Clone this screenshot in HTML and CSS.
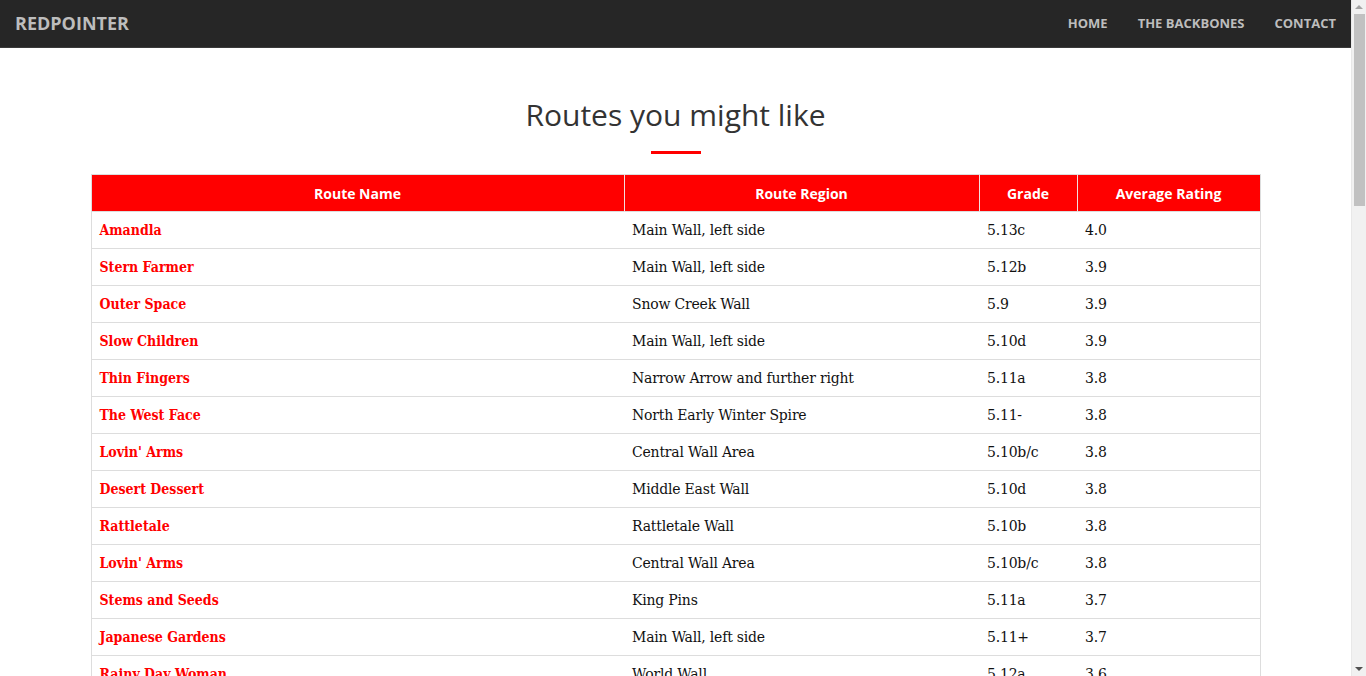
FILE: index.html
```html
<!DOCTYPE html>
<html lang="en">
<head>
<meta charset="utf-8">
<title>Redpointer</title>
<link rel="stylesheet" href="styles.css">
</head>
<body>
<nav class="navbar">
  <a class="brand" href="#">REDPOINTER</a>
  <ul class="nav-links">
    <li><a href="#">HOME</a></li>
    <li><a href="#">THE BACKBONES</a></li>
    <li><a href="#">CONTACT</a></li>
  </ul>
</nav>
<main class="container">
  <h2 class="section-title">Routes you might like</h2>
  <hr class="divider">
  <table class="routes">
    <thead>
      <tr>
        <th class="c-name">Route Name</th>
        <th class="c-region">Route Region</th>
        <th class="c-grade">Grade</th>
        <th class="c-rating">Average Rating</th>
      </tr>
    </thead>
    <tbody>
      <tr><td><a href="#">Amandla</a></td><td>Main Wall, left side</td><td>5.13c</td><td>4.0</td></tr>
      <tr><td><a href="#">Stern Farmer</a></td><td>Main Wall, left side</td><td>5.12b</td><td>3.9</td></tr>
      <tr><td><a href="#">Outer Space</a></td><td>Snow Creek Wall</td><td>5.9</td><td>3.9</td></tr>
      <tr><td><a href="#">Slow Children</a></td><td>Main Wall, left side</td><td>5.10d</td><td>3.9</td></tr>
      <tr><td><a href="#">Thin Fingers</a></td><td>Narrow Arrow and further right</td><td>5.11a</td><td>3.8</td></tr>
      <tr><td><a href="#">The West Face</a></td><td>North Early Winter Spire</td><td>5.11-</td><td>3.8</td></tr>
      <tr><td><a href="#">Lovin' Arms</a></td><td>Central Wall Area</td><td>5.10b/c</td><td>3.8</td></tr>
      <tr><td><a href="#">Desert Dessert</a></td><td>Middle East Wall</td><td>5.10d</td><td>3.8</td></tr>
      <tr><td><a href="#">Rattletale</a></td><td>Rattletale Wall</td><td>5.10b</td><td>3.8</td></tr>
      <tr><td><a href="#">Lovin' Arms</a></td><td>Central Wall Area</td><td>5.10b/c</td><td>3.8</td></tr>
      <tr><td><a href="#">Stems and Seeds</a></td><td>King Pins</td><td>5.11a</td><td>3.7</td></tr>
      <tr><td><a href="#">Japanese Gardens</a></td><td>Main Wall, left side</td><td>5.11+</td><td>3.7</td></tr>
      <tr><td><a href="#">Rainy Day Woman</a></td><td>World Wall</td><td>5.12a</td><td>3.6</td></tr>
      <tr><td><a href="#">Touch and Go</a></td><td>Main Wall, left side</td><td>5.9</td><td>3.6</td></tr>
      <tr><td><a href="#">Air Guitar</a></td><td>Central Wall Area</td><td>5.10b</td><td>3.6</td></tr>
      <tr><td><a href="#">Crack of Doom</a></td><td>Snow Creek Wall</td><td>5.10c</td><td>3.5</td></tr>
    </tbody>
  </table>
</main>
<div class="scrollbar" aria-hidden="true">
  <span class="arrow up"></span>
  <span class="thumb"></span>
  <span class="arrow down"></span>
</div>
</body>
</html>
```
FILE: styles.css
```css
html, body {
  margin: 0;
  padding: 0;
}
body {
  font-family: "DejaVu Serif", "Liberation Serif", serif;
  font-size: 14px;
  color: #000;
  background: #fff;
  margin-right: 15px;
}
.navbar {
  display: flex;
  align-items: center;
  justify-content: space-between;
  height: 46px;
  padding: 0 15px 1px;
  background: #262626;
  border-bottom: 1px solid #3a3a3a;
}
.brand {
  font-family: "Open Sans", sans-serif;
  font-weight: 700;
  font-size: 18px;
  color: #bdbdbd;
  text-decoration: none;
}
.nav-links {
  display: flex;
  list-style: none;
  margin: 0;
  padding: 0;
  gap: 30px;
}
.nav-links a {
  font-family: "Open Sans", sans-serif;
  font-weight: 700;
  font-size: 13px;
  color: #bdbdbd;
  text-decoration: none;
}
.container {
  width: 1170px;
  margin: 0 auto;
  padding-top: 47px;
  padding-bottom: 40px;
}
.section-title {
  font-family: "Open Sans", sans-serif;
  font-weight: 400;
  font-size: 30px;
  color: #333;
  text-align: center;
  margin: 0;
  line-height: 40px;
}
.divider {
  width: 50px;
  height: 3px;
  border: 0;
  background: #ff0000;
  margin: 16px auto 20px;
}
.routes {
  width: 1170px;
  border-collapse: collapse;
  border: 1px solid #ddd;
}
.routes th {
  background: #ff0000;
  color: #fff;
  font-family: "Open Sans", sans-serif;
  font-weight: 700;
  font-size: 14px;
  height: 37px;
  padding: 0 8px;
  text-align: center;
  border-left: 1px solid #f3dede;
  box-sizing: border-box;
}
.routes th:first-child { border-left: 0; }
.c-name { width: 533px; }
.c-region { width: 355px; }
.c-grade { width: 98px; }
.c-rating { width: 183px; }
.routes td {
  padding: 8px;
  line-height: 20px;
  border-top: 1px solid #ddd;
  text-align: left;
  color: #111;
  letter-spacing: -0.2px;
}
.routes td a {
  font-family: "DejaVu Serif Condensed", "DejaVu Serif", serif;
  color: #ff0000;
  font-weight: 700;
  text-decoration: none;
  letter-spacing: 0;
}
.scrollbar {
  position: fixed;
  top: 0;
  right: 0;
  width: 15px;
  height: 100vh;
  background: #f1f1f1;
  border-left: 1px solid #e8e8e8;
  box-sizing: border-box;
}
.thumb {
  position: absolute;
  top: 14px;
  left: 2px;
  width: 11px;
  height: 192px;
  background: #c1c1c1;
}
.arrow {
  position: absolute;
  left: 3px;
  width: 0;
  height: 0;
  border-left: 4px solid transparent;
  border-right: 4px solid transparent;
}
.arrow.up {
  top: 5px;
  border-bottom: 4px solid #a3a3a3;
}
.arrow.down {
  bottom: 5px;
  border-top: 4px solid #505050;
}
```
